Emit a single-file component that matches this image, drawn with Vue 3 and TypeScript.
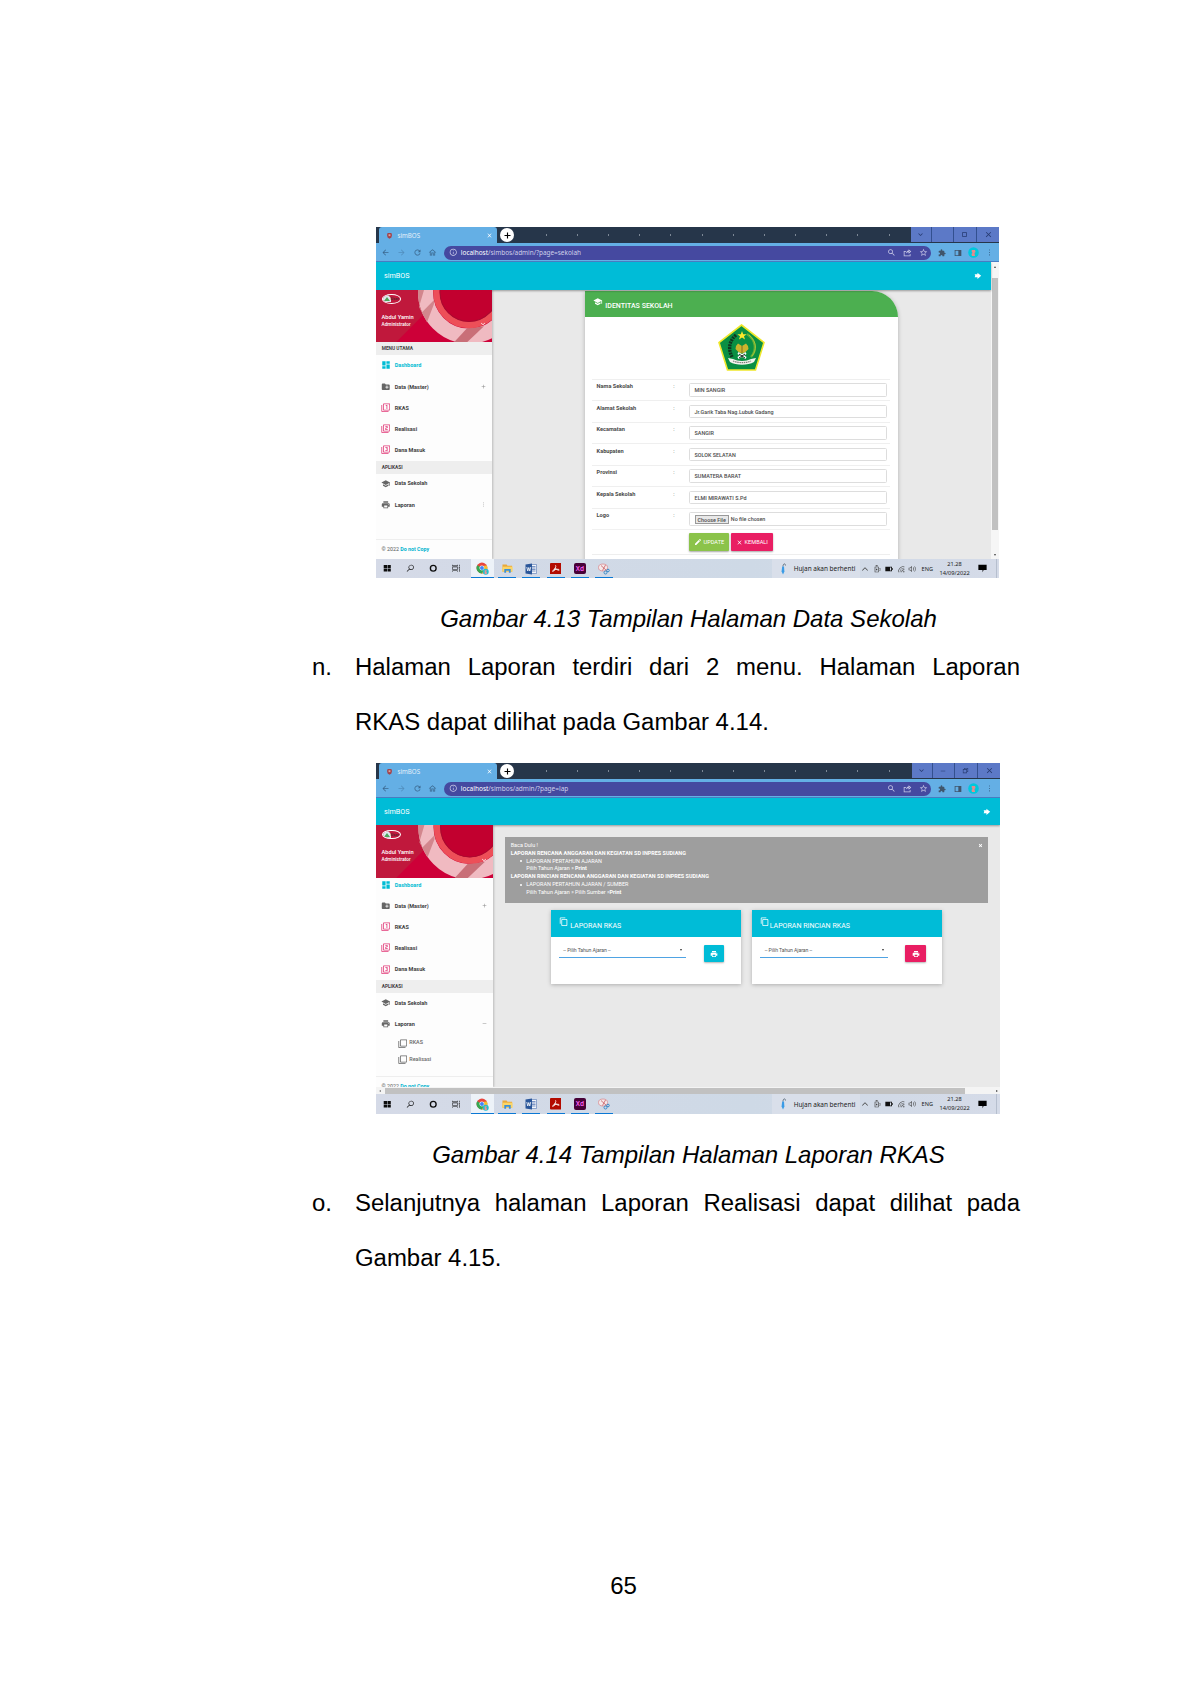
<script setup lang="ts">
import { h, type FunctionalComponent } from 'vue'

const paths: Record<string, string> = {
  dashboard: 'M3 13h8V3H3v10zm0 8h8v-6H3v6zm10 0h8V11h-8v10zm0-18v6h8V3h-8z',
  folder: 'M20 6h-8l-2-2H4c-1.11 0-1.99.89-1.99 2L2 18c0 1.11.89 2 2 2h16c1.11 0 2-.89 2-2V8c0-1.11-.89-2-2-2zm-1 8h-3v3h-2v-3h-3v-2h3V9h2v3h3v2z',
  one: 'M3 5H1v16c0 1.1.9 2 2 2h16v-2H3V5zm11 10h2V5h-4v2h2v8zm7-14H7c-1.1 0-2 .9-2 2v14c0 1.1.9 2 2 2h14c1.1 0 2-.9 2-2V3c0-1.1-.9-2-2-2zm0 16H7V3h14v14z',
  two: 'M3 5H1v16c0 1.1.9 2 2 2h16v-2H3V5zm18-4H7c-1.1 0-2 .9-2 2v14c0 1.1.9 2 2 2h14c1.1 0 2-.9 2-2V3c0-1.1-.9-2-2-2zm0 16H7V3h14v14zm-4-4h-4v-2h2c1.1 0 2-.89 2-2V7c0-1.11-.9-2-2-2h-4v2h4v2h-2c-1.1 0-2 .89-2 2v4h6v-2z',
  three: 'M3 5H1v16c0 1.1.9 2 2 2h16v-2H3V5zm18-4H7c-1.1 0-2 .9-2 2v14c0 1.1.9 2 2 2h14c1.1 0 2-.9 2-2V3c0-1.1-.9-2-2-2zm0 16H7V3h14v14zm-4-4v-1.5c0-.83-.67-1.5-1.5-1.5.83 0 1.5-.67 1.5-1.5V7c0-1.11-.9-2-2-2h-4v2h4v2h-2v2h2v2h-4v2h4c1.1 0 2-.89 2-2z',
  none: 'M3 5H1v16c0 1.1.9 2 2 2h16v-2H3V5zm18-4H7c-1.1 0-2 .9-2 2v14c0 1.1.9 2 2 2h14c1.1 0 2-.9 2-2V3c0-1.1-.9-2-2-2zm0 16H7V3h14v14z',
  school: 'M5 13.18v4L12 21l7-3.82v-4L12 17l-7-3.82zM12 3L1 9l11 6 9-4.91V17h2V9L12 3z',
  print: 'M19 8H5c-1.66 0-3 1.34-3 3v6h4v4h12v-4h4v-6c0-1.66-1.34-3-3-3zm-3 11H8v-5h8v5zm3-7c-.55 0-1-.45-1-1s.45-1 1-1 1 .45 1 1-.45 1-1 1zm-1-9H6v4h12V3z',
  copy: 'M16 1H4c-1.1 0-2 .9-2 2v14h2V3h12V1zm3 4H8c-1.1 0-2 .9-2 2v14c0 1.1.9 2 2 2h11c1.1 0 2-.9 2-2V7c0-1.1-.9-2-2-2zm0 16H8V7h11v14z',
  edit: 'M3 17.25V21h3.75L17.81 9.94l-3.75-3.75L3 17.25zM20.71 7.04c.39-.39.39-1.02 0-1.41l-2.34-2.34c-.39-.39-1.02-.39-1.41 0l-1.83 1.83 3.75 3.75 1.83-1.83z',
  close: 'M19 6.41L17.59 5 12 10.59 6.41 5 5 6.41 10.59 12 5 17.59 6.41 19 12 13.41 17.59 19 19 17.59 13.41 12z',
  closeBold: 'M20 7l-3-3-5 5-5-5-3 3 5 5-5 5 3 3 5-5 5 5 3-3-5-5z',
  back: 'M20 11H7.83l5.59-5.59L12 4l-8 8 8 8 1.41-1.41L7.83 13H20v-2z',
  forward: 'M12 4l-1.41 1.41L16.17 11H4v2h12.17l-5.58 5.59L12 20l8-8z',
  refresh: 'M17.65 6.35C16.2 4.9 14.21 4 12 4c-4.42 0-7.99 3.58-7.99 8s3.57 8 7.99 8c3.73 0 6.84-2.55 7.73-6h-2.08c-.82 2.33-3.04 4-5.65 4-3.31 0-6-2.69-6-6s2.69-6 6-6c1.66 0 3.14.69 4.22 1.78L13 11h7V4l-2.35 2.35z',
  home: 'M12 3L2 12h3v8h6v-6h2v6h6v-8h3L12 3zm5 15h-2v-6H9v6H7v-7.81l5-4.5 5 4.5V18z',
  info: 'M11 7h2v2h-2zm0 4h2v6h-2zm1-9C6.48 2 2 6.48 2 12s4.48 10 10 10 10-4.48 10-10S17.52 2 12 2zm0 18c-4.41 0-8-3.59-8-8s3.59-8 8-8 8 3.59 8 8-3.59 8-8 8z',
  search: 'M15.5 14h-.79l-.28-.27C15.41 12.59 16 11.11 16 9.5 16 5.91 13.09 3 9.5 3S3 5.91 3 9.5 5.91 16 9.5 16c1.61 0 3.09-.59 4.23-1.57l.27.28v.79l5 4.99L20.49 19l-4.99-5zm-6 0C7.01 14 5 11.99 5 9.5S7.01 5 9.5 5 14 7.01 14 9.5 11.99 14 9.5 14z',
  winSearch: 'M14.5 2A7.5 7.5 0 0 0 8.6 14.1L2 20.7 3.3 22l6.6-6.6A7.5 7.5 0 1 0 14.5 2zm0 1.7a5.8 5.8 0 1 1 0 11.6 5.8 5.8 0 0 1 0-11.6z',
  share: 'M2 8h6v2H4v10h14v-4h2v6H2zM15 3l7 6-7 6v-4c-4 0-6 1.5-7 4 0-5 3-8 7-8.500zm2 4.200V8.300l-3 .6 3 .3v1.500L19 9z',
  star: 'M22 9.24l-7.19-.62L12 2 9.19 8.63 2 9.24l5.46 4.73L5.82 21 12 17.27 18.18 21l-1.63-7.03L22 9.24zM12 15.4l-3.76 2.27 1-4.28-3.32-2.88 4.38-.38L12 6.1l1.71 4.04 4.38.38-3.32 2.88 1 4.28L12 15.4z',
  puzzle: 'M20.5 11H19V7c0-1.1-.9-2-2-2h-4V3.5a2.5 2.5 0 0 0-5 0V5H4c-1.1 0-2 .9-2 2v3.8h1.5a2.7 2.7 0 0 1 0 5.4H2V20c0 1.1.9 2 2 2h3.8v-1.5a2.7 2.7 0 0 1 5.4 0V22H17c1.1 0 2-.9 2-2v-4h1.5a2.5 2.5 0 0 0 0-5z',
  panel: 'M2 3h20v18H2zM4.5 5.5v13H13v-13z',
  more: 'M10.500 2h3v3.500h-3zm0 8.200h3v3.500h-3zm0 8.200h3V22h-3z',
  down: 'M7.41 8.59L12 13.17l4.59-4.58L18 10l-6 6-6-6z',
  up: 'M12 7l9 9-1.5 1.5L12 10l-7.5 7.500L3 16z',
  minus: 'M3 11h18v2.200H3z',
  restore: 'M7 3h14v14h-4v4H3V7h4zm2 2v2h8v8h2V5zM5 9v10h10V9z',
  square: 'M4 4h16v16H4zM6.5 6.5v11h11v-11z',
  out: 'M11 2v5H2l2 5-2 5h9v5l12-10z',
  plus: 'M13.5 4h-3v6.5H4v3h6.5V20h3v-6.500H20v-3h-6.500z',
  plusThin: 'M13.200 3h-2.400v7.800H3v2.400h7.800V21h2.400v-7.800H21v-2.400h-7.800z',
  chat: 'M1 2h22v14h-8l-3 6v-6H1z',
  windows: 'M2 3h9.300v8.500H2zM12.700 3H22v8.500h-9.300zM2 12.800h9.300V21H2zM12.700 12.800H22V21h-9.300z',
  cortana: 'M12 2a10 10 0 1 0 0 20 10 10 0 0 0 0-20zm0 3.800a6.200 6.200 0 1 1 0 12.400 6.200 6.200 0 0 1 0-12.400z',
  taskview: 'M1 2h1.500v2.500h12V2H16v4H1zM1 8h15v8H1zm1.500 1.500v5h12v-5zM1 18h15v4h-1.500v-2.500h-12V22H1zM20 2h1.500v5H20zm-.8 7h3v3.500h-3zm.8 5h1.500v8H20z',
  usb: 'M5 5h12v17H5zm2 2v13h8V7zM8 1h6v3H8zm1 10h4v5H9zM19 9h3v8h-3v-1.500h1.500v-5H19z',
  battery: 'M1 5h20v4h2v6h-2v4H1zm14 2.500v9h3.500v-9z',
  wifi: 'M22 3v1.700A17.300 17.300 0 0 0 4.700 22H3A19 19 0 0 1 22 3zm0 5v1.700A12.300 12.300 0 0 0 9.700 22H8A14 14 0 0 1 22 8zm0 5v1.700A7.300 7.300 0 0 0 14.700 22H13a9 9 0 0 1 9-9zm0 5v4h-4a4 4 0 0 1 4-4z',
  sound: 'M2 8.500h4L12 3v18l-6-5.500H2zM3.700 10v4h3l3.600 3.200V6.800L6.700 10zM15 8c2 2 2 6 0 8l1.200 1c3-3 3-7 0-10zm4-3c3.500 4 3.500 10 0 14l1.200 1c4-5 4-11 0-16z'
}

const Icon: FunctionalComponent<{ name: string; size?: number }> = (p) =>
  h('svg', { viewBox: '0 0 24 24', width: p.size ?? 8, height: p.size ?? 8, fill: 'currentColor' }, [
    h('path', { d: paths[p.name], 'fill-rule': 'evenodd' })
  ])
Icon.props = ['name', 'size']

interface MenuItem { icon: string; label: string; tone?: string; mark?: string }

const mainMenu: MenuItem[] = [
  { icon: 'dashboard', label: 'Dashboard', tone: 'active' },
  { icon: 'folder', label: 'Data (Master)', mark: 'plusThin' },
  { icon: 'one', label: 'RKAS', tone: 'pink' },
  { icon: 'two', label: 'Realisasi', tone: 'pink' },
  { icon: 'three', label: 'Dana Masuk', tone: 'pink' }
]

const windows = [
  { id: 'sekolah', path: '/simbos/admin/?page=sekolah', maxIcon: 'square', caption: 'Gambar 4.13 Tampilan Halaman Data Sekolah', letter: 'n.', text: 'Halaman Laporan terdiri dari 2 menu. Halaman Laporan RKAS dapat dilihat pada Gambar 4.14.' },
  { id: 'lap', path: '/simbos/admin/?page=lap', maxIcon: 'restore', caption: 'Gambar 4.14 Tampilan Halaman Laporan RKAS', letter: 'o.', text: 'Selanjutnya halaman Laporan Realisasi dapat dilihat pada Gambar 4.15.' }
]

const fields = [
  { label: 'Nama Sekolah', value: 'MIN SANGIR' },
  { label: 'Alamat Sekolah', value: 'Jr.Garik Taba Nag.Lubuk Gadang' },
  { label: 'Kecamatan', value: 'SANGIR' },
  { label: 'Kabupaten', value: 'SOLOK SELATAN' },
  { label: 'Provinsi', value: 'SUMATERA BARAT' },
  { label: 'Kepala Sekolah', value: 'ELMI MIRAWATI S.Pd' },
  { label: 'Logo', value: '' }
]

const reports = [
  { title: 'LAPORAN RKAS', tone: 'cyan' },
  { title: 'LAPORAN RINCIAN RKAS', tone: 'rose' }
]
const apps = ['chrome', 'files', 'word', 'pdf', 'xd', 'snip']
const tray = ['up', 'usb', 'battery', 'wifi', 'sound']
</script>

<template>
  <main class="page">
    <section v-for="w in windows" :key="w.id" class="figure" :class="w.id">
      <div class="screen">
        <div class="tabs">
          <div class="tab">
            <svg class="crest" viewBox="0 0 8 10" width="5" height="7"><path d="M1 1h6l1 3-1 4-3 2-3-2-1-4z" fill="#a3434c" /><path d="M2.500 3h3v3h-3z" fill="#d9a79b" /></svg>
            <span>simBOS</span>
            <Icon name="close" :size="7" class="tab-x" />
          </div>
          <div class="new-tab"><Icon name="plus" :size="9" /></div>
          <div class="dots"><i v-for="n in 12" :key="n"></i></div>
          <div class="controls">
            <b><Icon name="down" :size="9" /></b>
            <b><Icon v-if="w.id === 'lap'" name="minus" :size="6" /></b>
            <b><Icon :name="w.maxIcon" :size="7" /></b>
            <b><Icon name="close" :size="9" /></b>
          </div>
        </div>

        <div class="toolbar">
          <b v-for="n in ['back', 'forward', 'refresh', 'home']" :key="n" :class="n"><Icon :name="n" :size="9" /></b>
          <div class="address">
            <Icon name="info" :size="8.500" />
            <span class="url">localhost<em>{{ w.path }}</em></span>
            <b><Icon name="search" :size="9" /></b>
            <b><Icon name="share" :size="9" /></b>
            <b><Icon name="star" :size="9" /></b>
          </div>
          <b class="dark"><Icon name="puzzle" :size="8" /></b>
          <b class="dark"><Icon name="panel" :size="8" /></b>
          <b><svg width="11" height="11" viewBox="0 0 11 11"><circle cx="5.500" cy="5.500" r="5.300" fill="#00c8dc" /><path d="M4 3h3l.5 2-1 1 .5 3H4l-.5-2 1-1L3.500 4z" fill="#e58b8d" /></svg></b>
          <b><Icon name="more" :size="7" /></b>
        </div>

        <div class="viewport">
          <div class="site">
            <header class="site-head">
              <span>simBOS</span>
              <Icon name="out" :size="7.500" />
            </header>
            <div class="site-body">
              <aside class="side">
                <div class="user">
                  <svg class="user-bg" viewBox="0 0 116 52" preserveAspectRatio="none" width="100%" height="100%">
                    <path d="M0 0h116v52H0z" fill="#c0183c" />
                    <path d="M20 52L72 0h44v52z" fill="#cd0038" />
                    <circle cx="93" cy="2.300" r="43.500" fill="none" stroke="#f0bac1" stroke-width="15" />
                    <path d="M58 0h-16a51 51 0 0 0 4 22l12-12z M51 32L43 17l5-17h10v14z" fill="#d2868d" />
                    <path d="M78 52l13-14 17-2-17 16z" fill="#c96f78" />
                    <circle cx="93" cy="2.300" r="32.500" fill="#c2002f" stroke="#ed4f58" stroke-width="6.500" />
                    <circle cx="93" cy="2.300" r="29" fill="none" stroke="#a80a30" stroke-width="1" />
                  </svg>
                  <div class="avatar"><svg width="8" height="7" viewBox="0 0 8 7"><path d="M0 0h5l3 3v4H0z" fill="#dfe8ee" /><path d="M1 6l3-4 3 4z" fill="#4da65a" /></svg><span>User</span></div>
                  <div class="name">Abdul Yamin</div>
                  <div class="role"><span>Administrator</span><Icon name="down" :size="8" /></div>
                </div>
                <div v-if="w.id === 'sekolah'" class="band">MENU UTAMA</div>
                <nav class="menu">
                  <div v-for="m in mainMenu" :key="m.label" class="item" :class="m.tone">
                    <Icon :name="m.icon" :size="m.icon === 'dashboard' ? 10 : 9.500" /><span>{{ m.label }}</span>
                    <Icon v-if="m.mark" :name="m.mark" :size="5" class="mark" />
                  </div>
                </nav>
                <div class="band">APLIKASI</div>
                <nav class="menu apps-menu">
                  <div class="item"><Icon name="school" :size="9.500" /><span>Data Sekolah</span></div>
                  <div class="item"><Icon name="print" :size="9.500" /><span>Laporan</span><Icon :name="w.id === 'lap' ? 'minus' : 'more'" :size="5" class="mark" /></div>
                  <template v-if="w.id === 'lap'">
                    <div class="sub"><Icon name="none" :size="9.500" /><span>RKAS</span></div>
                    <div class="sub"><Icon name="none" :size="9.500" /><span>Realisasi</span></div>
                  </template>
                </nav>
                <footer class="legal">© 2022 <b>Do not Copy</b></footer>
              </aside>

              <div v-if="w.id === 'sekolah'" class="content">
                <div class="identity">
                  <div class="identity-head"><Icon name="school" :size="9.500" /><span>IDENTITAS SEKOLAH</span></div>
                  <div class="emblem">
                    <svg viewBox="0 0 47 47" width="47" height="47">
                      <path d="M23.500 1L46 18.500 37.500 46h-28L1 18.500z" fill="#0a8f43" stroke="#efe72a" stroke-width="1.600" />
                      <path d="M18 11c-7 6-8 14-4 22" fill="none" stroke="#10351f" stroke-width="3.400" stroke-dasharray="2 .8" />
                      <path d="M29 10c9 6 10 16 4 23" fill="none" stroke="#5fae38" stroke-width="2.200" />
                      <path d="M31 11c8 7 8 15 3 21" fill="none" stroke="#b9cb35" stroke-width=".8" />
                      <path d="M24 7l1.200 3.200h3.500L26 12.300l1 3.300-3-2-3 2 1-3.300-2.700-2.100h3.500z" fill="#fbe82b" />
                      <path d="M18 22l2-2.500 4 2.500 4-2.500 2 2.500 .5 3-3 3-3.500 1.500-3.500-1.500-3-3z" fill="#cbb52d" />
                      <path d="M24 22v7" stroke="#806f20" stroke-width="1" />
                      <path d="M20 29l8 5M28 29l-8 5" stroke="#fff" stroke-width="2.200" />
                      <path d="M21 30l6 4M27 30l-6 4" stroke="#17251c" stroke-width="1" />
                      <path d="M10 34l5 1c5 2.500 13 2.500 18 0l5-1-2 4c-6 3.500-18 3.500-24 0z" fill="#f4f4ee" />
                      <path d="M15 37c6 2.200 12 2.200 18 0" fill="none" stroke="#7c7f78" stroke-width="1.200" stroke-dasharray="1.500 .7" />
                    </svg>
                  </div>
                  <div v-for="f in fields" :key="f.label" class="row">
                    <label>{{ f.label }}</label><i>:</i>
                    <div class="input">
                      <template v-if="f.value">{{ f.value }}</template>
                      <template v-else><span class="choose">Choose File</span>No file chosen</template>
                    </div>
                  </div>
                  <div class="actions">
                    <span class="btn green"><Icon name="edit" :size="8" />UPDATE</span>
                    <span class="btn rose"><Icon name="close" :size="7" />KEMBALI</span>
                  </div>
                </div>
              </div>

              <div v-else class="content">
                <div class="notice">
                  <Icon name="closeBold" :size="5" class="notice-x" />
                  <p>Baca Dulu !</p>
                  <p><b>LAPORAN RENCANA ANGGARAN DAN KEGIATAN SD INPRES SUDIANG</b></p>
                  <p class="bullet">LAPORAN PERTAHUN AJARAN</p>
                  <p class="inner">Pilih Tahun Ajaran » <b>Print</b></p>
                  <p><b>LAPORAN RINCIAN RENCANA ANGGARAN DAN KEGIATAN SD INPRES SUDIANG</b></p>
                  <p class="bullet">LAPORAN PERTAHUN AJARAN / SUMBER</p>
                  <p class="inner">Pilih Tahun Ajaran » Pilih Sumber »<b>Print</b></p>
                </div>
                <div class="reports">
                  <div v-for="r in reports" :key="r.title" class="report" :class="r.tone">
                    <div class="report-head"><Icon name="copy" :size="9.500" /><span>{{ r.title }}</span></div>
                    <div class="report-body">
                      <div class="select"><span>-- Pilih Tahun Ajaran --</span><i></i></div>
                      <span class="print" :class="r.tone"><Icon name="print" :size="8" /></span>
                    </div>
                  </div>
                </div>
              </div>
            </div>
          </div>
          <div v-if="w.id === 'sekolah'" class="vbar"><i class="tri-up"></i><div></div><i class="tri-down"></i></div>
        </div>
        <div v-if="w.id === 'lap'" class="hbar"><i class="tri-left"></i><div></div><i class="tri-right"></i></div>

        <div class="taskbar">
          <b v-for="n in ['windows', 'winSearch', 'cortana', 'taskview']" :key="n" class="sys"><Icon :name="n" :size="8.500" /></b>
          <div class="apps">
            <b v-for="a in apps" :key="a" class="app" :class="a">
              <svg v-if="a === 'chrome'" viewBox="0 0 24 24" width="13" height="13"><circle cx="11" cy="11" r="10" fill="#e8453c" /><path d="M2.300 6A10 10 0 0 0 11 21l4.500-8L11 11z" fill="#35a853" /><path d="M20 6.500A10 10 0 0 1 11 21l4.500-8-1-6z" fill="#f4c02b" /><circle cx="11" cy="11" r="4.600" fill="#fff" /><circle cx="11" cy="11" r="3.600" fill="#4285f4" /><circle cx="18" cy="18" r="5.500" fill="#23c0cd" /><path d="M16 15h4v2h-2l2 2v3h-4z" fill="#e4969a" /></svg>
              <svg v-else-if="a === 'files'" viewBox="0 0 24 24" width="11" height="11"><path d="M1 3h9l2 3h10v13H1z" fill="#e9a93a" /><path d="M1 8h22v11H1z" fill="#fbd567" /><path d="M5 13h14v8h-4v-4H9v4H5z" fill="#3b8fd6" /></svg>
              <svg v-else-if="a === 'word'" viewBox="0 0 24 24" width="12" height="12"><path d="M11 3h12v18H11z" fill="#f2f5fa" stroke="#3a62a8" /><path d="M14 7h7M14 10h7M14 13h7M14 16h7" stroke="#3a62a8" stroke-width="1.300" /><path d="M1 3l13-2v22L1 21z" fill="#2a5699" /><path d="M3.500 8l2 8 2-7 2 7 2-8" fill="none" stroke="#fff" stroke-width="1.600" /></svg>
              <svg v-else-if="a === 'pdf'" viewBox="0 0 24 24" width="11.500" height="11.500"><rect width="24" height="24" rx="2" fill="#b30b00" /><path d="M11 5c3 0 0 8-6 12 4 2 5-5 6-6s4 5 8 4c1-3-8-2-11 0" fill="none" stroke="#fff" stroke-width="1.800" /></svg>
              <span v-else-if="a === 'xd'" class="xd-logo">Xd</span>
              <svg v-else viewBox="0 0 24 24" width="12" height="12"><ellipse cx="10" cy="9" rx="9" ry="7" fill="#f5e9ea" stroke="#d98a8f" stroke-width="1.500" /><path d="M6 5l11 10M15 4L9 15" stroke="#c95a61" stroke-width="1.600" /><circle cx="15" cy="19" r="3" fill="none" stroke="#3b8bc8" stroke-width="2" /><circle cx="20" cy="15" r="2.600" fill="none" stroke="#3b8bc8" stroke-width="2" /></svg>
            </b>
          </div>
          <div class="weather">
            <svg viewBox="0 0 8 12" width="8" height="12"><path d="M4 3.500C4 .2 6.500 .2 6.500 2.500" fill="none" stroke="#5a6a78" stroke-width=".9" /><path d="M3.200 3.500h1.800l.4 5L4 11.500 2.600 8.500z" fill="#3a9be6" /></svg>
            <span>Hujan akan berhenti</span>
          </div>
          <b v-for="t in tray" :key="t" class="tray" :class="t"><Icon :name="t" :size="8" /></b>
          <span class="lang">ENG</span>
          <div class="clock"><span>21.28</span><span>14/09/2022</span></div>
          <b class="alerts"><Icon name="chat" :size="9" /></b>
          <i class="peek"></i>
        </div>
      </div>

      <p class="caption">{{ w.caption }}</p>
      <div class="entry"><span>{{ w.letter }}</span><p>{{ w.text }}</p></div>
    </section>
    <footer class="folio">65</footer>
  </main>
</template>

<style>
body { margin: 0; background: #fff; }
</style>

<style scoped>
* { box-sizing: border-box; }
svg { display: block; flex: none; }
p { margin: 0; }
i, em { font-style: normal; }
.page { width: 1191px; height: 1684px; padding-top: 227px; background: #fff; color: #000; font-family: "Liberation Sans", Arial, sans-serif; overflow: hidden; display: flex; flex-direction: column; }
.figure { flex: none; margin-bottom: 14px; }
.screen { width: 623px; height: 351px; margin-left: 376px; display: flex; flex-direction: column; overflow: hidden; font-family: Roboto, sans-serif; }
.lap .screen { width: 624px; }

.tabs { flex: none; height: 16px; display: flex; align-items: center; background: #26364a; }
.tab { width: 118px; height: 16px; margin-left: 3px; padding: 0 4.500px 0 10px; display: flex; align-items: center; background: #64afe5; border-radius: 3px 3px 0 0; font: 6.200px "Noto Sans", sans-serif; color: #e4f0fa; }
.crest { margin-left: -2px; }
.tab span { margin-left: 5.500px; flex: 1; }
.tab-x { color: #fff; }
.new-tab { width: 14px; height: 14px; margin-left: 3px; border-radius: 50%; background: #fff; color: #000; display: flex; align-items: center; justify-content: center; }
.dots { flex: 1; margin-left: 16.500px; display: flex; }
.dots i { width: 1px; height: 1.500px; margin: 1px 15.100px; background: #7c8896; }
.controls { display: flex; width: 88.300px; height: 16px; align-self: flex-start; }
.controls b { width: 21.500px; height: 15px; background: #5c79c7; border-right: 1px solid #33508f; display: flex; align-items: center; justify-content: center; color: #263a70; }
.controls b:nth-child(3) { width: 23.500px; }
.controls b:last-child { flex: 1; border: 0; }

.toolbar { flex: none; height: 19px; padding-left: 2px; padding-top: 1px; display: flex; align-items: center; background: #64afe5; border-bottom: 1px solid #4a7fc6; color: #3b688f; }
.toolbar b { width: 15.700px; display: flex; justify-content: center; flex: none; }
.toolbar .forward { opacity: .45; }
.toolbar .dark { color: #40566c; }
.address { width: 487.300px; height: 14px; margin: 0 3.200px 0 2.900px; padding-left: 5px; border-radius: 7px; background: #4549a0; color: #c9cae8; display: flex; align-items: center; }
.url { flex: 1; margin-left: 3.700px; font: 6.450px "Noto Sans", sans-serif; color: #fff; white-space: nowrap; }
.url em { color: #cfd0ea; }
.lap .url { font-size: 6.520px; }

.viewport { flex: 1; min-height: 0; display: flex; }
.site { flex: 1; min-width: 0; display: flex; flex-direction: column; }
.site-head { flex: none; height: 27.500px; background: #00bcd7; color: #fff; display: flex; align-items: center; justify-content: space-between; padding: 0 9.500px 0 8px; font-size: 7.200px; box-shadow: 0 1px 2px rgba(0, 0, 0, .35); position: relative; }
.lap .site-head { height: 27px; }
.site-body { flex: 1; min-height: 0; display: flex; background: #e9e9e9; overflow: hidden; }
.side { width: 116px; flex: none; background: #fdfdfd; box-shadow: 1px 0 2px rgba(0, 0, 0, .2); display: flex; flex-direction: column; color: #3e3e3e; font-size: 5.500px; font-weight: 700; overflow: hidden; }
.lap .side { width: 117px; }
.user { flex: none; height: 52.300px; position: relative; padding: 4.500px 5px 0 5.500px; color: #fff; overflow: hidden; }
.lap .user { z-index: 1; height: 53px; }
.user-bg { position: absolute; inset: 0; }
.avatar { position: relative; width: 19px; height: 9.500px; border: 1px solid #fff; border-radius: 50%; overflow: hidden; display: flex; align-items: center; font-size: 4px; color: #5c2331; }
.name { position: relative; margin-top: 9px; line-height: 8px; font-weight: 500; font-size: 5.700px; }
.role { position: relative; height: 8px; margin-top: -.5px; display: flex; justify-content: space-between; align-items: center; font-weight: 500; font-size: 4.750px; }
.band { flex: none; height: 13px; line-height: 13px; padding-left: 5.700px; background: #eee; font-size: 4.800px; }
.menu { flex: none; }
.item { height: 21.200px; display: flex; align-items: center; padding: 0 6px 0 4.700px; color: #666; }
.item span { margin-left: 4.500px; flex: 1; color: #3f3f3f; }
.item.active, .item.active span { color: #00bcd4; }
.item.active span { margin-left: 4px; }
.item.pink { color: #e23a78; }
.mark { color: #8a8a8a; }
.lap .user + .menu { margin-top: -4px; }
.apps-menu { margin-top: -1px; }
.sub { position: relative; top: 1px; height: 16.300px; padding-left: 21.800px; display: flex; align-items: center; color: #666; font-weight: 500; font-size: 5.400px; }
.sub span { margin-left: 2px; margin-top: -2px; }
.legal { margin-top: auto; height: 20px; line-height: 19px; padding-left: 5.500px; border-top: 1px solid #eee; font-size: 5.300px; font-weight: 400; color: #555; white-space: nowrap; }
.legal b { color: #00b3cf; }
.lap .legal { height: 11.500px; line-height: 18px; }

.content { flex: 1; min-width: 0; }
.identity { width: 312.700px; margin: 1.200px 0 0 93.300px; height: 275px; background: #fff; border-top-right-radius: 26px; overflow: hidden; box-shadow: 0 1px 4px rgba(0, 0, 0, .25); color: #4a4a4a; }
.identity-head { height: 26.300px; padding-left: 8px; background: #4caf50; color: #fff; display: flex; align-items: center; font-size: 7.050px; font-weight: 500; }
.identity-head svg { margin-top: -3.500px; }
.identity-head span { margin: 2.500px 0 0 2.500px; white-space: nowrap; }
.emblem { height: 62px; padding: 7.500px 0 0 132.500px; }
.row { height: 21.500px; margin: 0 8px 0 7px; border-top: 1px solid #efefef; display: flex; align-items: flex-start; font-size: 5.600px; }
.row label { width: 76px; padding: 3.400px 0 0 4.300px; font-weight: 700; }
.row i { width: 21px; padding: 3.400px 0 0 5px; }
.input { width: 197.400px; height: 13.500px; margin-top: 3.300px; padding-left: 4.300px; border: 1px solid #ddd; border-radius: 1.500px; display: flex; align-items: center; font-size: 5.400px; font-weight: 500; white-space: pre; color: #4a4a4a; }
.choose { margin-right: 2px; height: 9px; line-height: 8px; padding: 0 2px; border: .8px solid #999; background: #e8e8e8; }
.actions { height: 26px; margin: 0 8px 0 7px; border-top: 1px solid #f1f1f1; border-bottom: 1px solid #eee; padding: 3px 0 0 97px; display: flex; gap: 2px; }
.btn { width: 39.700px; height: 17.500px; border-radius: 1px; display: flex; align-items: center; justify-content: center; gap: 1.500px; color: #fff; font-size: 5.600px; box-shadow: 0 1px 2px rgba(0, 0, 0, .35); }
.btn.green { background: #8bc34a; }
.btn.rose { background: #e91e63; width: 42px; }

.notice { position: relative; width: 483.600px; height: 66.300px; margin: 11.500px 0 0 11.700px; padding: 5.200px 6px 0; background: #9e9e9e; color: #fff; font-size: 5.460px; line-height: 7.900px; white-space: nowrap; }
.notice-x { position: absolute; top: 6.500px; right: 5px; }
.bullet { padding-left: 15.600px; display: flex; align-items: center; }
.bullet::before { content: ""; width: 2px; height: 2px; margin: 0 4px 0 -6px; border-radius: 50%; background: #fff; }
.inner { padding-left: 15.600px; }
.reports { display: flex; gap: 11.600px; margin: 7.700px 0 0 58px; }
.report { width: 189.900px; height: 73.500px; background: #fff; box-shadow: 0 1px 4px rgba(0, 0, 0, .25); }
.report-head { height: 26.500px; padding-left: 8px; background: #00bcd7; color: #fff; display: flex; align-items: center; font-size: 7.050px; white-space: nowrap; }
.report-head svg { margin-top: -3px; }
.report-head span { margin: 3px 0 0 1.700px; }
.rose .report-head span { margin-left: -.3px; }
.report-body { display: flex; padding: 8px 0 0 7.700px; }
.select { width: 127.500px; height: 13.500px; border-bottom: 1px solid #4fa3e3; padding: 0 4px 3px 4.600px; display: flex; align-items: center; justify-content: space-between; font-size: 5.200px; color: #555; }
.select span { letter-spacing: -.1px; }
.select i { border: 1.500px solid transparent; border-top: 2px solid #333; margin-top: 2px; }
.print { width: 20.500px; height: 17.500px; margin-left: 17.700px; border-radius: 1px; color: #fff; display: flex; align-items: center; justify-content: center; background: #00bcd7; box-shadow: 0 1px 2px rgba(0, 0, 0, .3); }
.print.rose { background: #e91e63; }

.vbar { width: 8px; background: #f6f6f6; display: flex; flex-direction: column; align-items: center; padding: 4px 0 3px; }
.vbar div { width: 6px; height: 252px; margin: 9.500px 0 auto; background: #c1c1c1; }
.tri-up, .tri-down, .tri-left, .tri-right { border: 1.500px solid transparent; flex: none; }
.tri-up { border-bottom: 2px solid #444; border-top: 0; }
.tri-down { border-top: 2px solid #444; border-bottom: 0; }
.hbar { flex: none; height: 6.700px; background: #f4f4f4; display: flex; align-items: center; padding: 0 2px 0 3px; }
.hbar div { width: 580.600px; height: 5.700px; margin-right: auto; margin-left: 3.500px; background: #c1c1c1; }
.tri-left { border-right: 2px solid #777; border-left: 0; }
.tri-right { border-left: 2px solid #444; border-right: 0; }

.taskbar { flex: none; height: 19px; background: linear-gradient(90deg, #d5dae7, #ced9e6 60%, #d5dbe8); display: flex; align-items: center; font-family: "Noto Sans", sans-serif; color: #222; }
.lap .taskbar { height: 20px; }
.sys { width: 23px; display: flex; justify-content: center; color: #0d0d0d; }
.apps { height: 100%; margin-left: 3.200px; display: flex; }
.app { width: 24.200px; height: 100%; display: flex; align-items: center; justify-content: center; background: linear-gradient(#0b78d4, #0b78d4) center bottom / 18px 1.300px no-repeat; }
.app.chrome { width: 23px; margin-right: 1px; background: linear-gradient(#0b78d4, #0b78d4) center bottom / 100% 1.300px no-repeat, #edf2f8; }
.xd-logo { width: 12px; height: 11.500px; border-radius: 2px; background: #470137; color: #ff61f6; font-size: 6.500px; font-weight: 600; line-height: 11px; text-align: center; }
.weather { width: 88px; height: 100%; margin-left: 155.500px; background: #d9dfea; display: flex; align-items: center; padding-left: 7.500px; font-size: 6.450px; white-space: nowrap; }
.weather span { margin-left: 6.500px; }
.tray { width: 11.700px; display: flex; justify-content: center; color: #444; }
.tray.battery { color: #111; }
.lang { width: 18.500px; text-align: center; font-size: 5.600px; }
.clock { width: 36px; display: flex; flex-direction: column; align-items: center; font-size: 5.700px; line-height: 9px; }
.alerts { width: 20px; display: flex; justify-content: center; color: #000; }
.peek { width: 1px; height: 100%; margin-left: 3px; background: #b6bfce; }

.caption { height: 61px; margin-left: 355px; width: 667px; padding-top: 20px; text-align: center; font-size: 24px; line-height: 41px; font-style: italic; white-space: nowrap; }
.entry { display: flex; margin-left: 312px; width: 708px; font-size: 23.950px; line-height: 55px; }
.entry span { width: 43px; flex: none; }
.entry p { flex: 1; text-align: justify; }
.folio { width: 1247px; margin-top: 273px; text-align: center; font-size: 24px; line-height: 28px; }
</style>
